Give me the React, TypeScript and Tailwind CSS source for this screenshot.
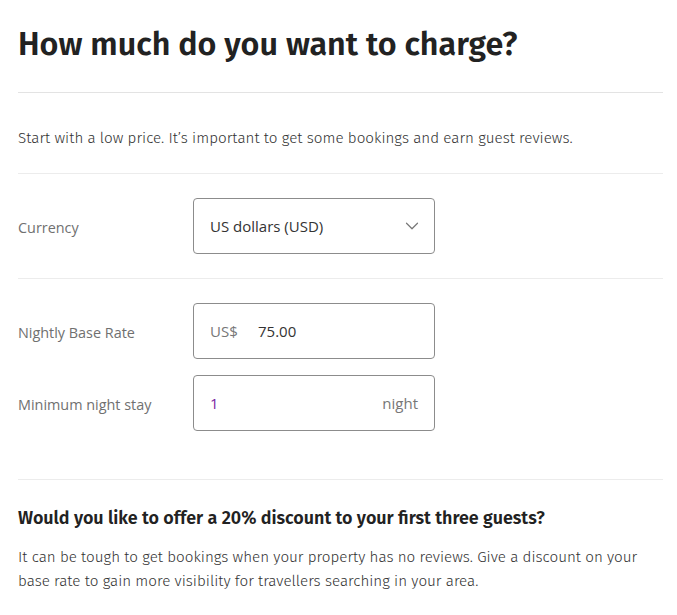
import { ChevronDown } from 'lucide-react'

const font = { fontFamily: '"Fira Sans", Lato, "Open Sans", sans-serif' }

function Label({ children }: { children: React.ReactNode }) {
  return (
    <div className="w-[175px] shrink-0 pt-[3px] font-['Open_Sans',sans-serif] text-[14.4px] text-[#707070]">
      {children}
    </div>
  )
}

function Box({ children }: { children: React.ReactNode }) {
  return (
    <div className="flex h-[56px] w-[242px] items-center rounded-[4px] border border-[#8c8c8c] px-4 font-['Open_Sans',sans-serif] text-[15px]">
      {children}
    </div>
  )
}

export default function App() {
  return (
    <div className="bg-white pr-[14px] pl-[18px] text-[#333]" style={font}>
      <h1 className="pt-[25px] pb-[27px] text-[32.3px] leading-[40px] font-semibold text-[#222]">
        How much do you want to charge?
      </h1>
      <div className="h-px bg-[#e3e3e3]" />
      <p className="pt-[38px] pb-[28px] text-[15.2px] leading-[14px] font-light text-[#333]">
        Start with a low price. It’s important to get some bookings and earn guest reviews.
      </p>
      <div className="h-px bg-[#ececec]" />

      <div className="flex items-center py-[24px]">
        <Label>Currency</Label>
        <Box>
          <span className="flex-1 text-[#333]">US dollars (USD)</span>
          <ChevronDown className="-mr-[5px] h-[22px] w-[22px] text-[#777]" strokeWidth={1.3} />
        </Box>
      </div>
      <div className="h-px bg-[#ececec]" />

      <div className="flex flex-col gap-[16px] pt-[24px] pb-[48px]">
        <div className="flex items-center">
          <Label>Nightly Base Rate</Label>
          <Box>
            <span className="w-[48px] text-[#777]">US$</span>
            <span className="text-[#333]">75.00</span>
          </Box>
        </div>
        <div className="flex items-center">
          <Label>Minimum night stay</Label>
          <Box>
            <span className="flex-1 text-[#7b1fa2]">1</span>
            <span className="text-[#777]">night</span>
          </Box>
        </div>
      </div>
      <div className="h-px bg-[#ececec]" />

      <h2 className="pt-[25px] text-[17.9px] leading-[26px] font-semibold text-[#222]">
        Would you like to offer a 20% discount to your first three guests?
      </h2>
      <p className="pt-[14px] pb-[30px] text-[15.2px] leading-[24px] font-light text-[#333]">
        It can be tough to get bookings when your property has no reviews. Give a discount on your base rate to gain
        more visibility for travellers searching in your area.
      </p>
    </div>
  )
}
